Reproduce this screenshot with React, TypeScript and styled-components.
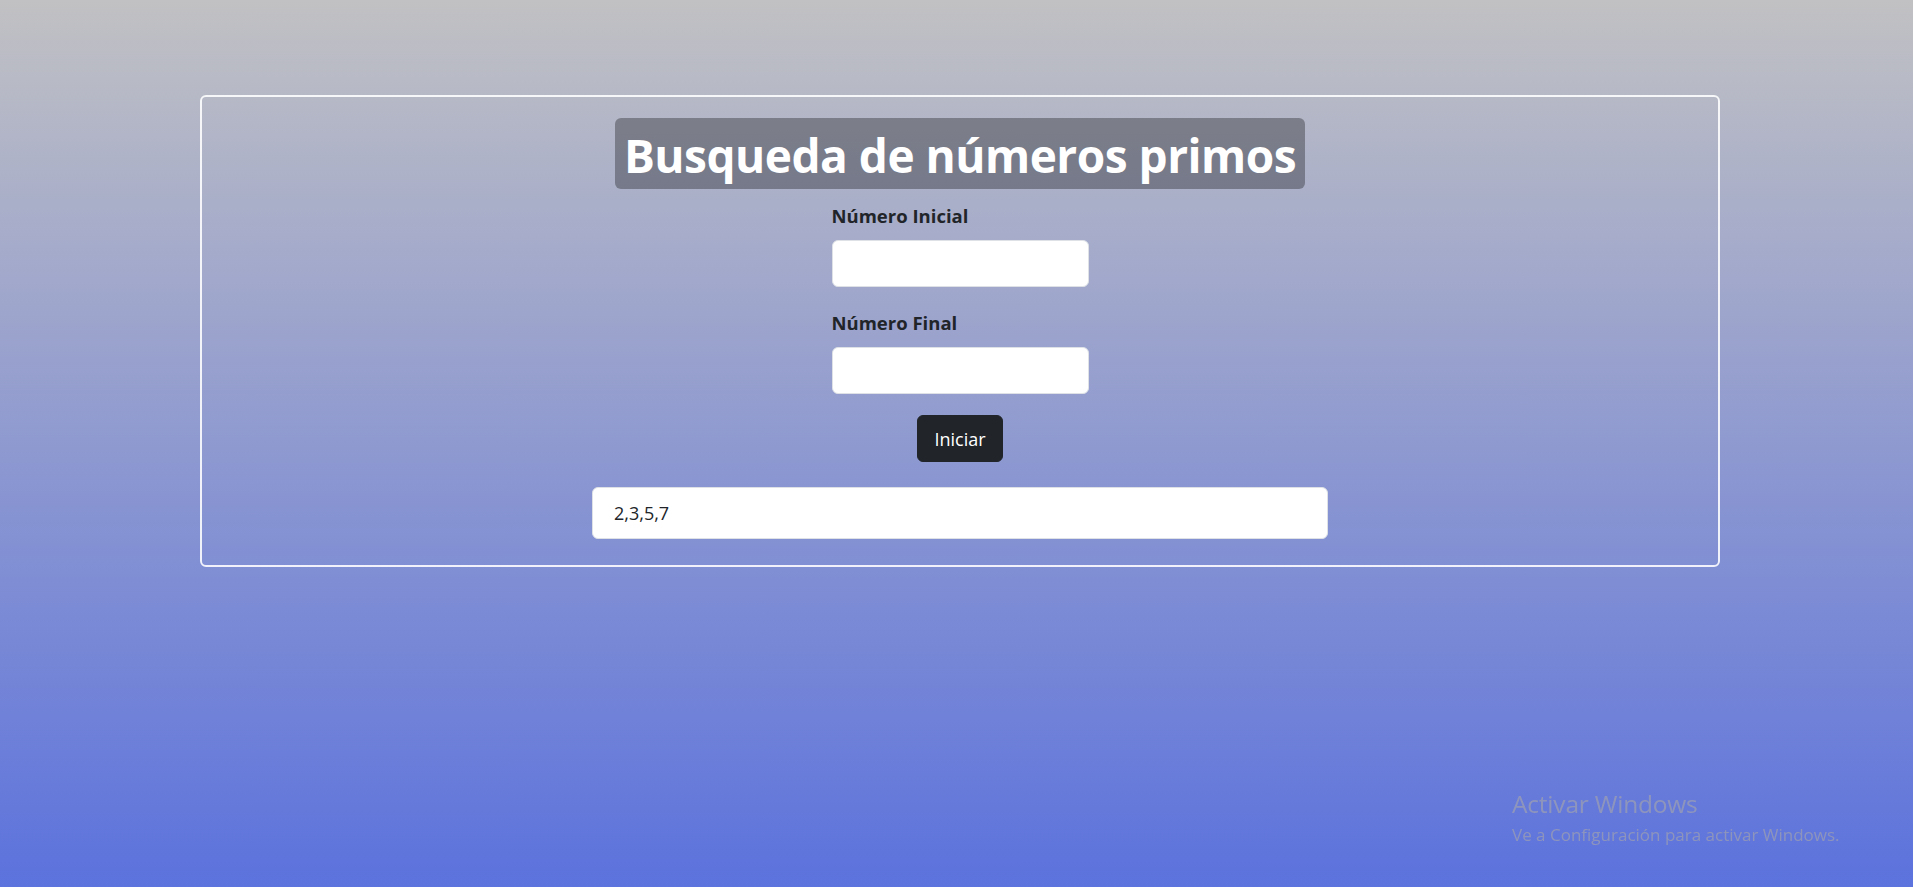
import React from "react";
import styled, { createGlobalStyle } from "styled-components";

const GlobalStyle = createGlobalStyle`
  html, body {
    margin: 0;
    padding: 0;
  }
  body {
    min-height: 100vh;
    font-family: "Open Sans", "Noto Sans", Arial, sans-serif;
    color: #212529;
    background: linear-gradient(to bottom, #c1c1c3 0%, #5c72dd 100%);
    background-attachment: fixed;
  }
  * { box-sizing: border-box; }
`;

const Page = styled.main`
  min-height: 100vh;
  display: flex;
  justify-content: center;
  align-items: flex-start;
  padding-top: 95px;
`;

const Card = styled.section`
  width: 1520px;
  margin-left: 7px;
  border: 2px solid rgba(255, 255, 255, 0.88);
  border-radius: 6px;
  padding: 21px 0 26px;
  display: flex;
  flex-direction: column;
  align-items: center;
`;

const Title = styled.h1`
  margin: 0;
  padding: 9px 9px 5px;
  font-size: 46px;
  line-height: 57px;
  letter-spacing: -0.5px;
  font-weight: 700;
  color: #ffffff;
  background: rgba(0, 0, 0, 0.31);
  border-radius: 6px;
  white-space: nowrap;
`;

const Form = styled.form`
  width: 257px;
  margin-top: 13px;
  display: flex;
  flex-direction: column;
  align-items: stretch;
`;

const Field = styled.div<{ $gap?: number }>`
  display: flex;
  flex-direction: column;
  margin-bottom: ${(p) => p.$gap ?? 0}px;
`;

const Label = styled.label`
  display: block;
  font-size: 18.5px;
  line-height: 27px;
  font-weight: 700;
  color: #212529;
  margin-bottom: 11px;
`;

const Input = styled.input`
  width: 100%;
  height: 47px;
  padding: 0 16px;
  font-family: inherit;
  font-size: 18px;
  color: #212529;
  background: #ffffff;
  border: 1px solid #dee2e6;
  border-radius: 6px;
  outline: none;
`;

const Actions = styled.div`
  display: flex;
  justify-content: center;
  margin-top: 21px;
`;

const Button = styled.button`
  height: 47px;
  padding: 0 16px;
  font-family: inherit;
  font-size: 18px;
  line-height: 1;
  color: #ffffff;
  background: #212529;
  border: 1px solid #212529;
  border-radius: 6px;
  cursor: pointer;
`;

const Result = styled.div`
  width: 736px;
  height: 52px;
  margin-top: 25px;
  padding: 0 21px;
  display: flex;
  align-items: center;
  font-size: 18px;
  color: #212529;
  background: #ffffff;
  border: 1px solid #dee2e6;
  border-radius: 6px;
`;

const Watermark = styled.div`
  position: fixed;
  left: 1512px;
  top: 788px;
  font-family: "Open Sans", "Noto Sans", Arial, sans-serif;
  color: rgba(165, 165, 172, 0.65);
  pointer-events: none;
`;

const WatermarkTitle = styled.div`
  font-size: 24.5px;
  line-height: 32px;
  font-weight: 400;
  letter-spacing: -0.2px;
`;

const WatermarkText = styled.div`
  margin-top: 3px;
  font-size: 17px;
  line-height: 24px;
  font-weight: 400;
`;

export default function App() {
  return (
    <>
      <GlobalStyle />
      <Page>
        <Card>
          <Title>Busqueda de números primos</Title>
          <Form onSubmit={(e) => e.preventDefault()}>
            <Field $gap={22}>
              <Label htmlFor="inicio">Número Inicial</Label>
              <Input id="inicio" type="number" />
            </Field>
            <Field>
              <Label htmlFor="fin">Número Final</Label>
              <Input id="fin" type="number" />
            </Field>
            <Actions>
              <Button type="submit">Iniciar</Button>
            </Actions>
          </Form>
          <Result>2,3,5,7</Result>
        </Card>
      </Page>
      <Watermark>
        <WatermarkTitle>Activar Windows</WatermarkTitle>
        <WatermarkText>Ve a Configuración para activar Windows.</WatermarkText>
      </Watermark>
    </>
  );
}
